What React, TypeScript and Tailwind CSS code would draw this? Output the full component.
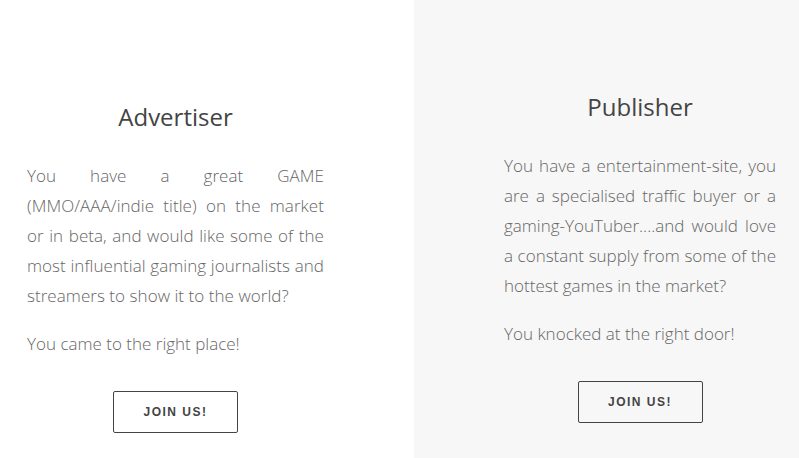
import React from 'react';

interface PanelProps {
  title: string;
  body: string;
  closing: string;
  bodyClass?: string;
}

function Panel({ title, body, closing, bodyClass = '' }: PanelProps) {
  return (
    <div className="flex flex-col">
      <h2 className="text-center text-[24px] leading-[30px] font-normal text-[#444] mb-[29px]">{title}</h2>
      <p className={`text-[17px] leading-[30px] font-light text-[#666] text-justify ${bodyClass}`}>{body}</p>
      <p className="text-[17px] leading-[30px] font-light text-[#666] mt-[18px]">{closing}</p>
      <div className="flex justify-center mt-[32px]">
        <button className="w-[125px] h-[42px] border border-[#444] rounded-[2px] text-[12px] font-bold tracking-[1.5px] text-[#444] bg-transparent [font-family:'Liberation_Sans',Arial,sans-serif]">
          JOIN US!
        </button>
      </div>
    </div>
  );
}

export default function App() {
  return (
    <div className="flex w-[799px] h-[458px] overflow-hidden [font-family:'Open_Sans',sans-serif]">
      <div className="w-[414px] bg-white pt-[102px] pl-[27px]">
        <div className="w-[297px]">
          <Panel
            title="Advertiser"
            body="You have a great GAME (MMO/AAA/indie title) on the market or in beta, and would like some of the most influential gaming journalists and streamers to show it to the world?"
            closing="You came to the right place!"
            bodyClass="tracking-[0.05px]"
          />
        </div>
      </div>
      <div className="flex-1 bg-[#f7f7f7] pt-[92px] pl-[90px]">
        <div className="w-[272px]">
          <Panel
            title="Publisher"
            body="You have a entertainment-site, you are a specialised traffic buyer or a gaming-YouTuber....and would love a constant supply from some of the hottest games in the market?"
            closing="You knocked at the right door!"
          />
        </div>
      </div>
    </div>
  );
}
